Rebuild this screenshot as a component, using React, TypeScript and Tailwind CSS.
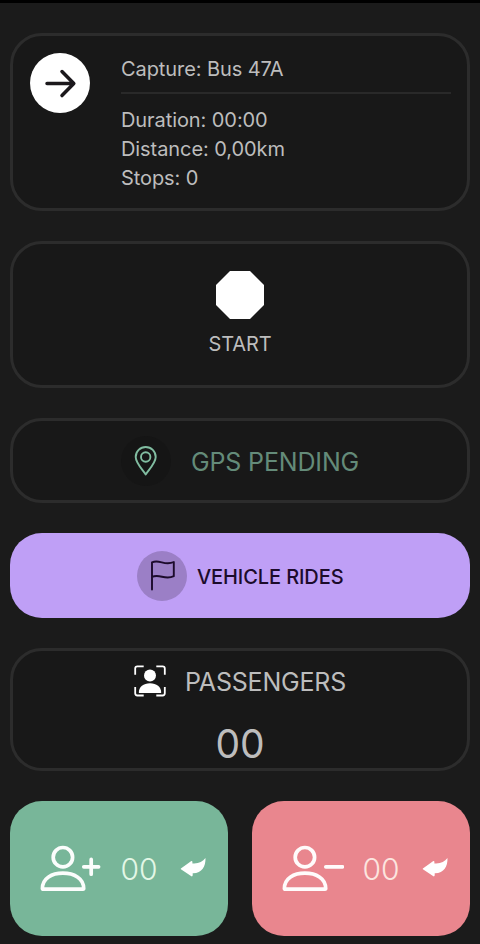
import type { ReactNode } from "react";

const stats = [
  { label: "Duration", value: "00:00" },
  { label: "Distance", value: "0,00km" },
  { label: "Stops", value: "0" },
];

function Card({ className, children }: { className: string; children: ReactNode }) {
  return (
    <section className={`rounded-[32px] border-[3px] border-[#2c2c2c] bg-[#181818] ${className}`}>
      {children}
    </section>
  );
}

function ArrowIcon() {
  return (
    <svg width="60" height="60" viewBox="0 0 60 60" fill="none" stroke="#1b181c" strokeWidth="3.5" strokeLinecap="round" strokeLinejoin="round">
      <path d="M17 30.6H43.5M32 18.6L43.8 30.6L32 42.6" />
    </svg>
  );
}

function PinIcon() {
  return (
    <svg width="24" height="30" viewBox="0 0 24 30" fill="none" stroke="#81bda1" strokeWidth="1.9" strokeLinejoin="round">
      <path d="M11.7 28.4C8.7 23.8 1.7 17 1.7 11A10 10 0 0 1 21.7 11C21.7 17 14.7 23.8 11.7 28.4Z" />
      <circle cx="11.7" cy="11" r="4.7" />
    </svg>
  );
}

function FlagIcon() {
  return (
    <svg width="50" height="50" viewBox="0 0 50 50" fill="none" stroke="#1c0b2b" strokeWidth="1.9" strokeLinecap="round" strokeLinejoin="round">
      <path d="M15 38.5V11.3C22.8 7.9 27.3 15.2 36.8 11V25.2C27.8 29.5 22.8 22.4 15 25.9" />
    </svg>
  );
}

function PassengerIcon() {
  return (
    <svg width="32" height="32" viewBox="0 0 32 32" fill="none">
      <path
        d="M1.2 9.8V3.5Q1.2 1.3 3.4 1.3H9.7M22.3 1.3H28.6Q30.8 1.3 30.8 3.5V9.8M30.8 22V28.3Q30.8 30.5 28.6 30.5H22.3M9.7 30.5H3.4Q1.2 30.5 1.2 28.3V22"
        stroke="white"
        strokeWidth="1.8"
      />
      <circle cx="16" cy="10.6" r="6" fill="white" />
      <path d="M4.8 27.4C4.8 22 9.5 18.3 16 18.3S27.2 22 27.2 27.4Q27.2 28 26.5 28H5.5Q4.8 28 4.8 27.4Z" fill="white" />
    </svg>
  );
}

function PersonIcon({ minus = false }: { minus?: boolean }) {
  return (
    <svg width="62" height="48" viewBox="0 0 62 48" fill="none" stroke="white" strokeOpacity=".97" strokeWidth="3.7" strokeLinecap="round" strokeLinejoin="round">
      <circle cx="22.9" cy="12.2" r="9.7" />
      <path d="M2.4 43.6C2.4 33 12 28.2 22.9 28.2S43.7 33 43.7 43.6Q43.7 44.2 43 44.2H3.1Q2.4 44.2 2.4 43.6Z" />
      <path d={minus ? "M43.8 21.8H60.5" : "M43.8 21.8H58.6M51.2 14.4V29.2"} />
    </svg>
  );
}

function UndoIcon() {
  return (
    <svg width="26" height="22" viewBox="0 0 26 22" fill="white">
      <path d="M.9 10.4L11 3.2Q12.4 2.3 12.4 4V5.4C18.5 5.9 22.5 4 25.5 0C25.7 8.5 22 15.4 12.7 15.2V17.3Q12.5 19 11 18.1L.9 11.2Q.4 10.8 .9 10.4Z" />
    </svg>
  );
}

function CounterButton({ minus = false, className }: { minus?: boolean; className: string }) {
  return (
    <button className={`flex h-[135px] w-[218px] items-center rounded-[32px] pl-[30px] ${className}`}>
      <PersonIcon minus={minus} />
      <span className="ml-[18px] w-[38px] text-[30px] leading-9 font-light opacity-90">00</span>
      <span className="ml-[22px]">
        <UndoIcon />
      </span>
    </button>
  );
}

export default function App() {
  return (
    <main className="flex h-[944px] w-[480px] flex-col gap-[30px] overflow-hidden border-t-[3px] border-black bg-[#1b1b1b] px-[10px] pt-[30px] font-['Inter',sans-serif] text-[#bdbdbd]">
      {/* Current capture */}
      <Card className="flex h-[178px] shrink-0 pt-[17px] pr-[16px] pl-[17px]">
        <div className="h-[60px] w-[60px] shrink-0 rounded-full bg-white">
          <ArrowIcon />
        </div>
        <div className="ml-[31px] flex-1 text-[20px] leading-[29px] tracking-[-0.08px]">
          <h1 className="h-[41px] border-b-2 border-[#292929] pt-[2px]">Capture: Bus 47A</h1>
          <ul className="mt-[12px]">
            {stats.map((stat) => (
              <li key={stat.label}>
                {stat.label}: {stat.value}
              </li>
            ))}
          </ul>
        </div>
      </Card>

      {/* Start */}
      <Card className="flex h-[147px] shrink-0 flex-col items-center pt-[27px]">
        <svg width="48" height="48" viewBox="0 0 48 48" fill="white">
          <path d="M14 0H34L48 14V34L34 48H14L0 34V14Z" />
        </svg>
        <span className="mt-[10px] text-[20px] leading-[30px] tracking-[-0.1px]">START</span>
      </Card>

      {/* GPS status */}
      <Card className="flex h-[85px] shrink-0 items-center pl-[108px] text-[#648b79]">
        <div className="flex h-[50px] w-[50px] items-center justify-center rounded-full bg-[#151515]">
          <PinIcon />
        </div>
        <span className="ml-[20px] pt-[4px] text-[25px] tracking-[-0.15px]">GPS PENDING</span>
      </Card>

      <button className="flex h-[85px] shrink-0 items-center rounded-[32px] bg-[#bf9ff6] pl-[127px] text-[#1c0b2b]">
        <span className="h-[50px] w-[50px] rounded-full bg-[#9b7fc6]">
          <FlagIcon />
        </span>
        <span className="ml-[10px] pt-[2px] text-[20px] font-medium tracking-[-0.1px]">VEHICLE RIDES</span>
      </button>

      {/* Passenger totals */}
      <Card className="flex h-[123px] shrink-0 flex-col items-center">
        <div className="mt-[14px] flex h-[32px] items-center gap-[19px]">
          <PassengerIcon />
          <span className="pt-[4px] text-[25px] tracking-[-0.2px]">PASSENGERS</span>
        </div>
        <span className="mt-[22px] text-[39px] leading-[50px]">00</span>
      </Card>

      <div className="flex shrink-0 justify-between">
        <CounterButton className="bg-[#78b699] text-[#efffef]" />
        <CounterButton minus className="bg-[#e9868e] text-[#fff0e8]" />
      </div>
    </main>
  );
}
